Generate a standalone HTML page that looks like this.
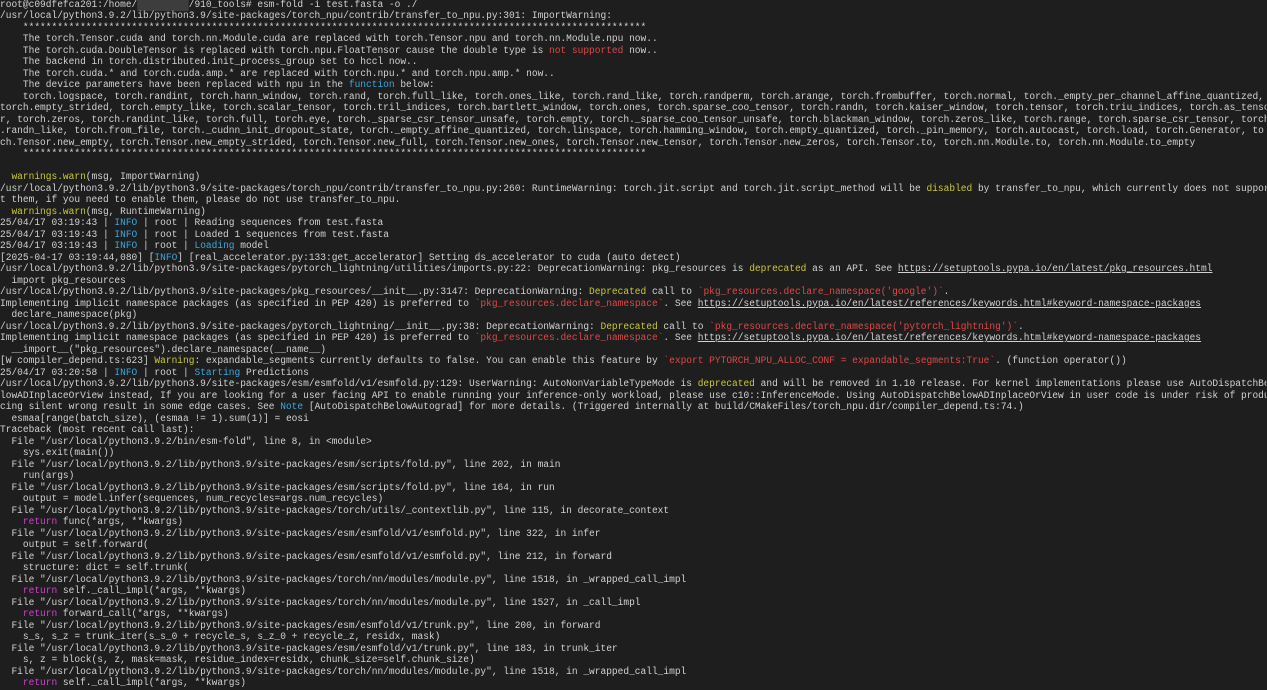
<!DOCTYPE html>
<html><head><meta charset="utf-8"><style>
html,body{margin:0;padding:0;background:#1e1e1e;width:1267px;height:690px;overflow:hidden}
pre{margin:0;position:absolute;left:0;top:-0.5px;font-family:"Liberation Mono",monospace;font-size:10px;line-height:11.5px;color:#d2d2d2;transform:scaleX(0.953);transform-origin:0 0;white-space:pre;width:1329px;height:690px;overflow:hidden}
.y{color:#c9c935}.r{color:#e04848}.b{color:#3ba7dc}.m{color:#d040d0}.u{text-decoration:underline}
.x{background:#3d3d3d;color:#3d3d3d}
</style></head><body><pre>root@c09dfefca201:/home/<span class="x">         </span>/910_tools# esm-fold -i test.fasta -o ./
/usr/local/python3.9.2/lib/python3.9/site-packages/torch_npu/contrib/transfer_to_npu.py:301: ImportWarning:
    *************************************************************************************************************
    The torch.Tensor.cuda and torch.nn.Module.cuda are replaced with torch.Tensor.npu and torch.nn.Module.npu now..
    The torch.cuda.DoubleTensor is replaced with torch.npu.FloatTensor cause the double type is <span class="r">not supported</span> now..
    The backend in torch.distributed.init_process_group set to hccl now..
    The torch.cuda.* and torch.cuda.amp.* are replaced with torch.npu.* and torch.npu.amp.* now..
    The device parameters have been replaced with npu in the <span class="b">function</span> below:
    torch.logspace, torch.randint, torch.hann_window, torch.rand, torch.full_like, torch.ones_like, torch.rand_like, torch.randperm, torch.arange, torch.frombuffer, torch.normal, torch._empty_per_channel_affine_quantized, torch
torch.empty_strided, torch.empty_like, torch.scalar_tensor, torch.tril_indices, torch.bartlett_window, torch.ones, torch.sparse_coo_tensor, torch.randn, torch.kaiser_window, torch.tensor, torch.triu_indices, torch.as_tensor
r, torch.zeros, torch.randint_like, torch.full, torch.eye, torch._sparse_csr_tensor_unsafe, torch.empty, torch._sparse_coo_tensor_unsafe, torch.blackman_window, torch.zeros_like, torch.range, torch.sparse_csr_tensor, torch
.randn_like, torch.from_file, torch._cudnn_init_dropout_state, torch._empty_affine_quantized, torch.linspace, torch.hamming_window, torch.empty_quantized, torch._pin_memory, torch.autocast, torch.load, torch.Generator, to
ch.Tensor.new_empty, torch.Tensor.new_empty_strided, torch.Tensor.new_full, torch.Tensor.new_ones, torch.Tensor.new_tensor, torch.Tensor.new_zeros, torch.Tensor.to, torch.nn.Module.to, torch.nn.Module.to_empty
    *************************************************************************************************************

  <span class="y">warnings.warn</span>(msg, ImportWarning)
/usr/local/python3.9.2/lib/python3.9/site-packages/torch_npu/contrib/transfer_to_npu.py:260: RuntimeWarning: torch.jit.script and torch.jit.script_method will be <span class="y">disabled</span> by transfer_to_npu, which currently does not support
t them, if you need to enable them, please do not use transfer_to_npu.
  <span class="y">warnings.warn</span>(msg, RuntimeWarning)
25/04/17 03:19:43 | <span class="b">INFO</span> | root | Reading sequences from test.fasta
25/04/17 03:19:43 | <span class="b">INFO</span> | root | Loaded 1 sequences from test.fasta
25/04/17 03:19:43 | <span class="b">INFO</span> | root | <span class="b">Loading</span> model
[2025-04-17 03:19:44,080] [<span class="b">INFO</span>] [real_accelerator.py:133:get_accelerator] Setting ds_accelerator to cuda (auto detect)
/usr/local/python3.9.2/lib/python3.9/site-packages/pytorch_lightning/utilities/imports.py:22: DeprecationWarning: pkg_resources is <span class="y">deprecated</span> as an API. See <span class="u">https://setuptools.pypa.io/en/latest/pkg_resources.html</span>
  import pkg_resources
/usr/local/python3.9.2/lib/python3.9/site-packages/pkg_resources/__init__.py:3147: DeprecationWarning: <span class="y">Deprecated</span> call to <span class="r">`pkg_resources.declare_namespace('google')`</span>.
Implementing implicit namespace packages (as specified in PEP 420) is preferred to <span class="r">`pkg_resources.declare_namespace`</span>. See <span class="u">https://setuptools.pypa.io/en/latest/references/keywords.html#keyword-namespace-packages</span>
  declare_namespace(pkg)
/usr/local/python3.9.2/lib/python3.9/site-packages/pytorch_lightning/__init__.py:38: DeprecationWarning: <span class="y">Deprecated</span> call to <span class="r">`pkg_resources.declare_namespace('pytorch_lightning')`</span>.
Implementing implicit namespace packages (as specified in PEP 420) is preferred to <span class="r">`pkg_resources.declare_namespace`</span>. See <span class="u">https://setuptools.pypa.io/en/latest/references/keywords.html#keyword-namespace-packages</span>
  __import__("pkg_resources").declare_namespace(__name__)
[W compiler_depend.ts:623] <span class="y">Warning</span>: expandable_segments currently defaults to false. You can enable this feature by <span class="r">`export PYTORCH_NPU_ALLOC_CONF = expandable_segments:True`</span>. (function operator())
25/04/17 03:20:58 | <span class="b">INFO</span> | root | <span class="b">Starting</span> Predictions
/usr/local/python3.9.2/lib/python3.9/site-packages/esm/esmfold/v1/esmfold.py:129: UserWarning: AutoNonVariableTypeMode is <span class="y">deprecated</span> and will be removed in 1.10 release. For kernel implementations please use AutoDispatchBelowADInplaceOrView
lowADInplaceOrView instead, If you are looking for a user facing API to enable running your inference-only workload, please use c10::InferenceMode. Using AutoDispatchBelowADInplaceOrView in user code is under risk of produ
cing silent wrong result in some edge cases. See <span class="b">Note</span> [AutoDispatchBelowAutograd] for more details. (Triggered internally at build/CMakeFiles/torch_npu.dir/compiler_depend.ts:74.)
  esmaa[range(batch_size), (esmaa != 1).sum(1)] = eosi
Traceback (most recent call last):
  File "/usr/local/python3.9.2/bin/esm-fold", line 8, in &lt;module&gt;
    sys.exit(main())
  File "/usr/local/python3.9.2/lib/python3.9/site-packages/esm/scripts/fold.py", line 202, in main
    run(args)
  File "/usr/local/python3.9.2/lib/python3.9/site-packages/esm/scripts/fold.py", line 164, in run
    output = model.infer(sequences, num_recycles=args.num_recycles)
  File "/usr/local/python3.9.2/lib/python3.9/site-packages/torch/utils/_contextlib.py", line 115, in decorate_context
    <span class="m">return</span> func(*args, **kwargs)
  File "/usr/local/python3.9.2/lib/python3.9/site-packages/esm/esmfold/v1/esmfold.py", line 322, in infer
    output = self.forward(
  File "/usr/local/python3.9.2/lib/python3.9/site-packages/esm/esmfold/v1/esmfold.py", line 212, in forward
    structure: dict = self.trunk(
  File "/usr/local/python3.9.2/lib/python3.9/site-packages/torch/nn/modules/module.py", line 1518, in _wrapped_call_impl
    <span class="m">return</span> self._call_impl(*args, **kwargs)
  File "/usr/local/python3.9.2/lib/python3.9/site-packages/torch/nn/modules/module.py", line 1527, in _call_impl
    <span class="m">return</span> forward_call(*args, **kwargs)
  File "/usr/local/python3.9.2/lib/python3.9/site-packages/esm/esmfold/v1/trunk.py", line 200, in forward
    s_s, s_z = trunk_iter(s_s_0 + recycle_s, s_z_0 + recycle_z, residx, mask)
  File "/usr/local/python3.9.2/lib/python3.9/site-packages/esm/esmfold/v1/trunk.py", line 183, in trunk_iter
    s, z = block(s, z, mask=mask, residue_index=residx, chunk_size=self.chunk_size)
  File "/usr/local/python3.9.2/lib/python3.9/site-packages/torch/nn/modules/module.py", line 1518, in _wrapped_call_impl
    <span class="m">return</span> self._call_impl(*args, **kwargs)
</pre></body></html>
